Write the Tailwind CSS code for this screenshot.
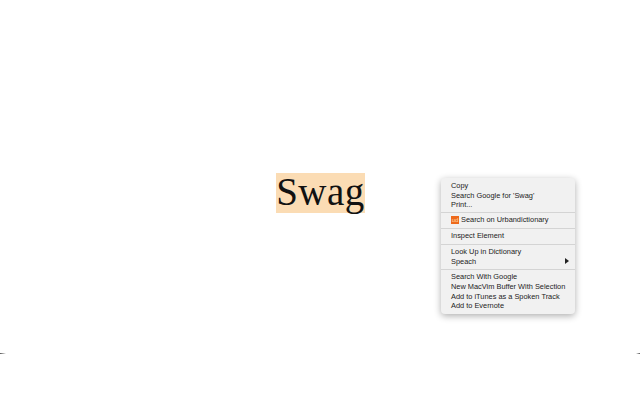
<!doctype html>
<html lang="en">
<head>
  <meta charset="UTF-8" />
  <title>Swag</title>
  <script src="https://cdn.jsdelivr.net/npm/@tailwindcss/browser@4"></script>
</head>
<body class="relative w-[640px] h-[400px] overflow-hidden bg-white">
  <!-- selected word -->
  <div class="flex justify-center pt-[173px] pl-px">
    <span class="block h-10 w-[89px] bg-[#fbdcb4] font-['Liberation_Serif',serif] text-[39px] leading-[37px] tracking-[0.5px] text-center text-[#111]">Swag</span>
  </div>

  <!-- context menu -->
  <div class="absolute left-[441px] top-[178px] w-[134px] h-[136px] rounded bg-[#f1f1f1] pt-[3px] shadow-[0_2px_7px_rgba(0,0,0,0.32)] font-['Liberation_Sans',sans-serif] text-[7.4px] leading-[9.6px] whitespace-nowrap text-[#222]">
    <div class="pl-[10px]">
      <div>Copy</div>
      <div>Search Google for 'Swag'</div>
      <div>Print...</div>
    </div>
    <div class="mt-[2.5px] mb-[2.2px] border-t border-[#d4d4d4]"></div>
    <div class="flex items-center pl-[10px]">
      <span class="mr-[2px] h-2 w-2 bg-[#ee6a1c] text-[6px] leading-2 text-center text-[#ffd9a8]">ud</span>
      <span>Search on Urbandictionary</span>
    </div>
    <div class="mt-[3px] mb-[2.2px] border-t border-[#d4d4d4]"></div>
    <div class="pl-[10px]">Inspect Element</div>
    <div class="mt-[3px] mb-[2.2px] border-t border-[#d4d4d4]"></div>
    <div class="pl-[10px]">
      <div>Look Up in Dictionary</div>
      <div class="flex items-center justify-between pr-[6px]">
        <span>Speach</span>
        <svg class="h-[6px] w-1" viewBox="0 0 4 6"><path d="M0 0L4 3L0 6Z" fill="#222" /></svg>
      </div>
    </div>
    <div class="mt-[3px] mb-[2.2px] border-t border-[#d4d4d4]"></div>
    <div class="pl-[10px]">
      <div>Search With Google</div>
      <div>New MacVim Buffer With Selection</div>
      <div>Add to iTunes as a Spoken Track</div>
      <div>Add to Evernote</div>
    </div>
  </div>

  <!-- specks at the bottom edges -->
  <div class="absolute left-0 top-[353px] h-px w-[6px] bg-gradient-to-r from-[#555] to-white"></div>
  <div class="absolute right-0 top-[353px] h-px w-[4px] bg-gradient-to-l from-[#555] to-white"></div>
</body>
</html>
